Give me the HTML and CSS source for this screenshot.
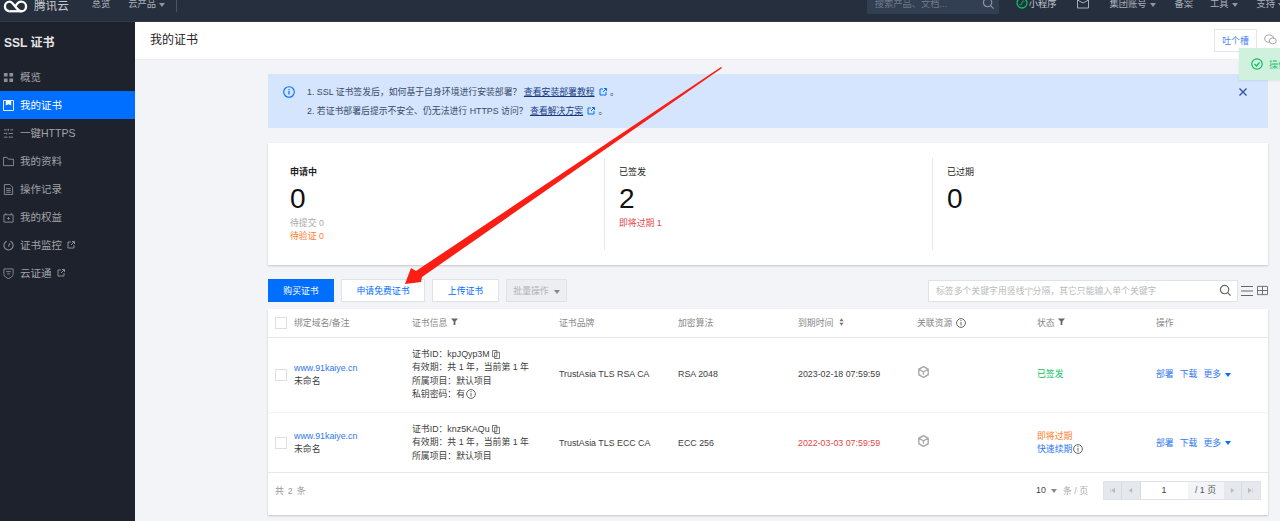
FILE: index.html
```html
<!DOCTYPE html>
<html lang="zh-CN">
<head>
<meta charset="utf-8">
<title>我的证书</title>
<link rel="stylesheet" href="styles.css">
</head>
<body>
<header class="topbar">
  <div class="topbar-inner">
    <svg class="logo" viewBox="0 0 26 16" width="25" height="16"><path d="M7 14.500a5 5 0 0 1 0-10c4 0 7 10 12 10a5 5 0 0 0 0-10c-3 0-5 3-6 5" fill="none" stroke="#fff" stroke-width="2.400"/><path d="M7 14.500h12" stroke="#fff" stroke-width="2.400"/></svg>
    <span class="brand">腾讯云</span>
    <span class="nav first">总览</span>
    <span class="nav second">云产品<i class="caret"></i></span>
    <span class="divider"></span>
    <span class="spacer"></span>
    <div class="top-search"><span>搜索产品、文档...</span>
      <svg viewBox="0 0 14 14" width="13" height="13"><circle cx="6" cy="6" r="4.500" fill="none" stroke="#8b94a3" stroke-width="1.300"/><path d="M9.500 9.500l3 3" stroke="#8b94a3" stroke-width="1.300"/></svg>
    </div>
    <span class="nav mini"><svg viewBox="0 0 12 12" width="12" height="12"><circle cx="6" cy="6" r="5" fill="none" stroke="#07c160" stroke-width="1.300"/><path d="M3.500 7.500c1 1 2.500.5 2.500-1.500s1.500-2.500 2.500-1.500" fill="none" stroke="#07c160"/></svg>小程序</span>
    <svg class="mail" viewBox="0 0 12 12" width="12" height="12"><path d="M.5 1h11v10H.5zM.5 3l5.500 3 5.500-3" fill="none" stroke="#aab0ba"/></svg>
    <span class="badge"></span>
    <span class="nav account">集团账号<i class="caret"></i></span>
    <span class="nav beian">备案</span>
    <span class="nav tools">工具<i class="caret"></i></span>
    <span class="nav help">支持<i class="caret"></i></span>
  </div>
</header>

<div class="layout">
  <aside class="sidebar">
    <h2 class="side-title">SSL 证书</h2>
    <nav>
      <a class="side-item"><svg viewBox="0 0 12 12"><path d="M1 1h4v4H1zM7 1h4v4H7zM1 7h4v4H1zM7 7h4v4H7z" fill="#8b8f97"/></svg>概览</a>
      <a class="side-item active"><svg viewBox="0 0 12 12"><path d="M.5.5h11v11H.5z" fill="none" stroke="#fff"/><path d="M3 1h6v5L6 4.500 3 6z" fill="#fff"/></svg>我的证书</a>
      <a class="side-item"><svg viewBox="0 0 12 12"><path d="M1 2h4M8 2h3M1 6h2M6 6h5M1 10h4M8 10h3M6 1v2M4 5v2M7 9v2" stroke="#8b8f97" fill="none"/></svg>一键HTTPS</a>
      <a class="side-item"><svg viewBox="0 0 12 12"><path d="M.5 1.500h4l1.500 2h5.500v7H.5z" fill="none" stroke="#8b8f97"/></svg>我的资料</a>
      <a class="side-item"><svg viewBox="0 0 12 12"><path d="M1.500.5h6l3 3v8h-9zM3.500 5h5M3.500 7h5M3.500 9h5" fill="none" stroke="#8b8f97"/></svg>操作记录</a>
      <a class="side-item"><svg viewBox="0 0 12 12"><path d="M1 3h10v8H1zM3 1v2M9 1v2M4.500 7h3M6 5.500v3" fill="none" stroke="#8b8f97"/></svg>我的权益</a>
      <a class="side-item"><svg viewBox="0 0 12 12"><path d="M4 1.300a5 5 0 1 0 4 0M6 7l1.500-3.500" fill="none" stroke="#8b8f97" stroke-width="1.200"/></svg>证书监控<svg class="ext" viewBox="0 0 8 8"><path d="M4 1H1v6h6V4M4 4l3.500-3.500M5 .5h2.500V3" fill="none" stroke="#8b8f97"/></svg></a>
      <a class="side-item"><svg viewBox="0 0 12 12"><path d="M1 1h10v6c0 2-3 4-5 4.500C4 11 1 9 1 7zM3.500 4h5M4.500 6.500h3" fill="none" stroke="#8b8f97"/></svg>云证通<svg class="ext" viewBox="0 0 8 8"><path d="M4 1H1v6h6V4M4 4l3.500-3.500M5 .5h2.500V3" fill="none" stroke="#8b8f97"/></svg></a>
    </nav>
  </aside>

  <main class="main">
    <div class="page-head">
      <h1>我的证书</h1>
      <button class="feedback">吐个槽</button>
      <svg class="wechat" viewBox="0 0 14 12" width="13" height="11"><ellipse cx="5.500" cy="5" rx="4.800" ry="4" fill="none" stroke="#9a9a9a"/><ellipse cx="9.500" cy="7.500" rx="3.800" ry="3.200" fill="#fff" stroke="#9a9a9a"/></svg>
    </div>
    <div class="content">
      <section class="alert">
        <svg class="alert-icon" viewBox="0 0 12 12" width="12" height="12"><circle cx="6" cy="6" r="5.300" fill="none" stroke="#006eff" stroke-width="1.100"/><path d="M6 5v3.500M6 3v1.200" stroke="#006eff" stroke-width="1.200"/></svg>
        <div class="alert-text">
          <p>1. SSL 证书签发后，如何基于自身环境进行安装部署？ <a>查看安装部署教程</a><svg class="ext" viewBox="0 0 8 8"><path d="M4 1H1v6h6V4M4 4l3.500-3.500M5 .5h2.500V3" fill="none" stroke="#006eff"/></svg> 。</p>
          <p>2. 若证书部署后提示不安全、仍无法进行 HTTPS 访问？ <a>查看解决方案</a><svg class="ext" viewBox="0 0 8 8"><path d="M4 1H1v6h6V4M4 4l3.500-3.500M5 .5h2.500V3" fill="none" stroke="#006eff"/></svg> 。</p>
        </div>
        <svg class="alert-close" viewBox="0 0 8 8" width="8" height="8"><path d="M.5.5l7 7M7.500.5l-7 7" stroke="#2b4fa8" stroke-width="1.300"/></svg>
      </section>

      <section class="stats">
        <div class="stat">
          <h3 class="strong">申请中</h3>
          <div class="num">0</div>
          <div class="sub grey">待提交 0</div>
          <div class="sub orange">待验证 0</div>
        </div>
        <div class="stat">
          <h3>已签发</h3>
          <div class="num">2</div>
          <div class="sub red">即将过期 1</div>
        </div>
        <div class="stat">
          <h3>已过期</h3>
          <div class="num">0</div>
        </div>
      </section>

      <section class="toolbar">
        <button class="btn primary">购买证书</button>
        <button class="btn wide">申请免费证书</button>
        <button class="btn">上传证书</button>
        <button class="btn disabled">批量操作<i class="caret dark"></i></button>
        <span class="spacer"></span>
        <div class="search"><span>标签多个关键字用竖线“|”分隔，其它只能输入单个关键字</span>
          <svg viewBox="0 0 14 14" width="13" height="13"><circle cx="6" cy="6" r="4.500" fill="none" stroke="#666" stroke-width="1.300"/><path d="M9.500 9.500l3 3" stroke="#666" stroke-width="1.300"/></svg>
        </div>
        <svg class="view" viewBox="0 0 12 12" width="12" height="12"><path d="M0 1.500h12M0 6h12M0 10.500h12" stroke="#666"/></svg>
        <svg class="view last" viewBox="0 0 12 12" width="11" height="11"><path d="M.5 1.500h11v9H.5zM.5 6h11M6 1.500v9" fill="none" stroke="#666"/></svg>
      </section>

      <section class="panel">
        <table class="grid">
          <colgroup><col class="c0"><col class="c1"><col class="c2"><col class="c3"><col class="c4"><col class="c5"><col class="c6"><col class="c7"><col class="c8"></colgroup>
          <thead>
            <tr>
              <th class="check"><span class="box"></span></th>
              <th>绑定域名/备注</th>
              <th>证书信息 <svg class="filter" viewBox="0 0 8 8"><path d="M0 .5h8L5 4v4H3V4z" fill="#666"/></svg></th>
              <th>证书品牌</th>
              <th>加密算法</th>
              <th>到期时间 <svg class="sort" viewBox="0 0 6 9"><path d="M3 0l2.500 3.500h-5zM3 9L.5 5.500h5z" fill="#777"/></svg></th>
              <th>关联资源 <svg class="info" viewBox="0 0 10 10"><circle cx="5" cy="5" r="4.400" fill="none" stroke="#666"/><path d="M5 4v3.500M5 2v1.200" stroke="#666"/></svg></th>
              <th>状态 <svg class="filter" viewBox="0 0 8 8"><path d="M0 .5h8L5 4v4H3V4z" fill="#666"/></svg></th>
              <th>操作</th>
            </tr>
          </thead>
          <tbody>
            <tr class="row-a">
              <td class="check"><span class="box"></span></td>
              <td><a class="link">www.91kaiye.cn</a><div>未命名</div></td>
              <td class="info-cell">
                <div>证书ID：kpJQyp3M <svg class="copy" viewBox="0 0 9 10"><path d="M.5.500h5v7h-5zM3 2.500h5.500v7H3z" fill="#fff" stroke="#666"/></svg></div>
                <div>有效期：共 1 年，当前第 1 年</div>
                <div>所属项目：默认项目</div>
                <div>私钥密码：有<svg class="info" viewBox="0 0 10 10"><circle cx="5" cy="5" r="4.400" fill="none" stroke="#666"/><path d="M5 4v3.500M5 2v1.200" stroke="#666"/></svg></div>
              </td>
              <td>TrustAsia TLS RSA CA</td>
              <td>RSA 2048</td>
              <td>2023-02-18 07:59:59</td>
              <td><svg class="res" viewBox="0 0 10 11"><path d="M5 .5l4.300 2.500v5L5 10.500.7 8V3zM1 3l4 2.500L9 3M5 5.500V8" fill="none" stroke="#aaa" stroke-width="1.300"/></svg></td>
              <td class="green">已签发</td>
              <td><a class="link">部署</a><a class="link gap">下载</a><a class="link gap">更多</a><i class="caret blue"></i></td>
            </tr>
            <tr class="row-b">
              <td class="check"><span class="box"></span></td>
              <td><a class="link">www.91kaiye.cn</a><div>未命名</div></td>
              <td class="info-cell">
                <div>证书ID：knz5KAQu <svg class="copy" viewBox="0 0 9 10"><path d="M.5.500h5v7h-5zM3 2.500h5.500v7H3z" fill="#fff" stroke="#666"/></svg></div>
                <div>有效期：共 1 年，当前第 1 年</div>
                <div>所属项目：默认项目</div>
              </td>
              <td>TrustAsia TLS ECC CA</td>
              <td>ECC 256</td>
              <td class="red">2022-03-03 07:59:59</td>
              <td><svg class="res" viewBox="0 0 10 11"><path d="M5 .5l4.300 2.500v5L5 10.500.7 8V3zM1 3l4 2.500L9 3M5 5.500V8" fill="none" stroke="#aaa" stroke-width="1.300"/></svg></td>
              <td><div class="orange">即将过期</div><div><a class="link">快速续期</a><svg class="info" viewBox="0 0 10 10"><circle cx="5" cy="5" r="4.400" fill="none" stroke="#666"/><path d="M5 4v3.500M5 2v1.200" stroke="#666"/></svg></div></td>
              <td><a class="link">部署</a><a class="link gap">下载</a><a class="link gap">更多</a><i class="caret blue"></i></td>
            </tr>
          </tbody>
        </table>
        <footer class="pager">
          <span class="total">共 2 条</span>
          <span class="spacer"></span>
          <span class="size">10<i class="caret grey-caret"></i></span>
          <span class="unit">条 / 页</span>
          <div class="pages">
            <span class="pg"><svg viewBox="0 0 6 6"><path d="M.5 0v6M6 0v6L2 3z" fill="#bbb" stroke="#bbb" stroke-width=".5"/></svg></span>
            <span class="pg"><svg viewBox="0 0 6 6"><path d="M5 0v6L1 3z" fill="#bbb"/></svg></span>
            <span class="pg-input">1</span>
            <span class="pg-total">/ 1 页</span>
            <span class="pg"><svg viewBox="0 0 6 6"><path d="M1 0v6l4-3z" fill="#bbb"/></svg></span>
            <span class="pg"><svg viewBox="0 0 6 6"><path d="M5.500 0v6M0 0v6l4-3z" fill="#bbb" stroke="#bbb" stroke-width=".5"/></svg></span>
          </div>
        </footer>
      </section>
    </div>
  </main>
</div>

<div class="toast">
  <svg viewBox="0 0 12 12" width="12" height="12"><circle cx="6" cy="6" r="5.200" fill="none" stroke="#0abf5b" stroke-width="1.200"/><path d="M3.500 6l2 2 3-3.500" fill="none" stroke="#0abf5b" stroke-width="1.200"/></svg>
  <span>操作成功</span>
</div>

<svg class="arrow" viewBox="0 0 1280 521" width="1280" height="521"><polygon points="721,67 722,68 422,277 421,282 405,284 411,268 416,271" fill="#fa1e14"/></svg>
</body>
</html>
```
FILE: styles.css
```css
* { box-sizing: border-box; }
html, body { margin: 0; height: 521px; overflow: hidden; }
body {
  font-family: "Liberation Sans", "Noto Sans CJK SC", sans-serif;
  font-size: 8.850px;
  color: #3d3d3d;
  background: #f2f4f8;
  position: relative;
  width: 1280px;
}
h1, h2, h3, p { margin: 0; font-weight: normal; }
i { font-style: normal; }
.spacer { flex: 1; }

.caret { display: inline-block; width: 0; height: 0; margin-left: 3px; border: 3px solid transparent; border-top: 4px solid #8d95a3; border-bottom: 0; vertical-align: middle; }

.topbar { height: 22px; background: #262f3e; overflow: hidden; border-bottom: 1px solid #2f3848; }
.topbar-inner { display: flex; align-items: center; height: 50px; margin-top: -22px; color: #aab0ba; font-size: 9.250px; }
.logo { margin: 3px 0 0 3px; }
.brand { margin: 3px 0 0 6px; font-size: 11.600px; color: #c6cad1; }
.nav { white-space: nowrap; }
.first { margin-left: 23px; }
.second { margin-left: 18px; }
.divider { width: 1px; height: 18px; background: #4a5362; margin-left: 11px; }
.top-search { display: flex; align-items: center; justify-content: space-between; width: 132px; height: 22px; padding: 0 4px 0 8px; background: #323e52; color: #6f7a8b; }
.mini { display: flex; align-items: center; gap: 1px; margin-left: 17px; color: #c2c6cd; }
.mail { margin-left: 20px; }
.badge { width: 10px; height: 8px; margin: -16px 0 0 3px; border-radius: 0 0 5px 5px; background: #006eff; }
.account { margin-left: 8px; }
.beian { margin-left: 19px; }
.tools { margin-left: 17px; }
.help { margin: 0 -4px 0 19px; }

.layout { display: flex; height: 499px; }
.sidebar { width: 135px; flex: none; background: #1e222d; color: #a1a4aa; font-size: 10.500px; }
.side-title { height: 41px; padding: 13px 0 0 4px; color: #e4e5e7; font-size: 12px; font-weight: bold; line-height: 16px; }
.side-item { display: flex; align-items: center; height: 28px; padding-left: 3px; line-height: 28px; }
.side-item > svg:first-child { width: 11px; height: 11px; margin-right: 6px; flex: none; }
.side-item .ext, .alert-text .ext { width: 8px; height: 8px; margin-left: 5px; }
.side-item.active { background: #006eff; color: #fff; }

.main { flex: 1; min-width: 0; }
.page-head { display: flex; align-items: center; height: 38px; padding-left: 15px; background: #fff; border-bottom: 1px solid #eef0f3; }
.page-head h1 { flex: 1; font-size: 12px; line-height: 16px; color: #222; margin-top: -2px; }
.feedback { width: 43px; height: 23px; margin: -1px 0 0; padding: 0; background: #fff; border: 1px solid #e3e6ea; color: #4d85ef; font: inherit; }
.wechat { margin: -3px 3px 0 7px; }

.content { width: 1000px; margin-left: 133px; padding-top: 14px; }
.alert { display: flex; height: 54px; padding: 12px 7px 0 15px; background: #d4e5fd; color: #3a4a66; }
.alert-icon { flex: none; }
.alert-text { flex: 1; margin: -3px 0 0 12px; line-height: 19px; }
.alert-text a { color: #163a82; text-decoration: underline; }
.alert-text .ext { margin-left: 4px; margin-right: 1px; vertical-align: -1px; }
.alert-close { margin: 2px 14px 0 0; }

.stats { display: flex; height: 122px; margin-top: 15px; padding: 15px 22px 15px 0; background: #fff; box-shadow: 0 1px 2px rgba(0,0,0,.2); }
.stat { flex: 0 0 328px; padding: 8px 0 0 22px; border-right: 1px solid #e8e9eb; }
.stat:first-child { flex-basis: 337px; }
.stat:last-child { border-right: 0; flex: 1; padding-left: 14px; }
.stat:nth-child(2) { padding-left: 14px; }
.stat h3 { font-size: 9px; line-height: 13px; color: #222; }
.stat h3.strong { font-weight: bold; }
.num { font-size: 28px; line-height: 34px; margin-top: 3px; color: #111; }
.sub { line-height: 13px; position: relative; top: 1px; }
.grey { color: #aaa; }
.orange { color: #ff7a28; }
.red { color: #e54545; }
.green { color: #0abf5b; }

.toolbar { display: flex; align-items: center; height: 23px; margin-top: 14px; }
.btn { width: 67px; height: 23px; margin: 0 7px 0 0; padding: 0; border: 1px solid #dfe2e6; background: #fff; color: #006eff; font: inherit; text-align: center; }
.btn.wide { width: 84px; }
.btn.primary { width: 66px; background: #006eff; border-color: #006eff; color: #fff; margin-right: 7px; }
.btn.disabled { width: 61px; margin-right: 0; background: #eceef1; color: #b2b2b2; }
.caret.dark { border-top-color: #888; margin-left: 5px; }
.search { display: flex; align-items: center; justify-content: space-between; width: 310px; height: 22px; padding: 0 5px 0 7px; background: #fff; border: 1px solid #dfe2e6; color: #bbb; }
.view { margin-left: 3px; }
.view.last { margin-left: 4px; }

.panel { margin-top: 7px; background: #fff; box-shadow: 0 1px 2px rgba(0,0,0,.2); }
.grid { width: 100%; border-collapse: collapse; table-layout: fixed; }
.c0 { width: 26px; } .c1 { width: 118px; } .c2 { width: 147px; } .c3 { width: 119px; }
.c4 { width: 120px; } .c5 { width: 119px; } .c6 { width: 120px; } .c7 { width: 119px; } .c8 { width: 112px; }
.grid th { height: 28px; padding: 0; text-align: left; font-weight: normal; color: #888; border-bottom: 1px solid #e5e8ed; }
.grid td { padding: 0; line-height: 13px; vertical-align: middle; }
.row-a { height: 75px; }
.row-a td { border-bottom: 1px solid #f3f4f7; }
.row-b { height: 60px; }
.row-b td { border-bottom: 1px solid #e5e8ed; padding-top: 2px; }
.check { padding-left: 7px !important; }
.box { display: block; width: 12px; height: 12px; background: #fff; border: 1px solid #dddfe3; }
.link { color: #2f76f0; }
.gap { margin-left: 6px; }
.caret.blue { border-top-color: #006eff; margin-left: 4px; }
.info-cell div { height: 13.300px; }
.filter { width: 7px; height: 7px; margin-left: 1px; vertical-align: 1px; }
.sort { width: 5px; height: 8px; margin-left: 3px; vertical-align: 0; }
.info { width: 10px; height: 10px; margin-left: 1px; vertical-align: -2px; }
.copy { width: 8px; height: 9px; vertical-align: -2px; }
.res { width: 11px; height: 12px; display: block; margin: -5px 0 0 1px; }

.pager { display: flex; align-items: center; height: 42px; padding: 0 7px 7px; color: #999; }
.total { word-spacing: 1.500px; }
.size { color: #444; }
.grey-caret { border-top-color: #888; margin-left: 5px; }
.unit { margin-left: 6px; margin-right: 15px; color: #aaa; }
.pages { display: flex; height: 19px; background: #e5e8ed; border: 1px solid #dfe2e6; }
.pg { display: flex; align-items: center; justify-content: center; width: 18.250px; border-right: 1px solid #d6d9de; }
.pg:last-child { border-right: 0; }
.pg svg { width: 5px; height: 5px; }
.pg-input { width: 47px; background: #fff; color: #444; text-align: center; line-height: 17px; }
.pg-total { width: 36px; background: #f2f4f8; color: #555; text-align: center; line-height: 17px; }

.toast { position: absolute; left: 1239px; top: 48px; width: 60px; height: 32px; display: flex; align-items: center; gap: 6px; padding-left: 12px; background: #d0f1de; color: #2fc678; font-size: 9px; box-shadow: 0 1px 2px rgba(0,0,0,.08); white-space: nowrap; overflow: hidden; }
.toast svg { flex: none; }
.arrow { position: absolute; left: 0; top: 0; pointer-events: none; }
```
